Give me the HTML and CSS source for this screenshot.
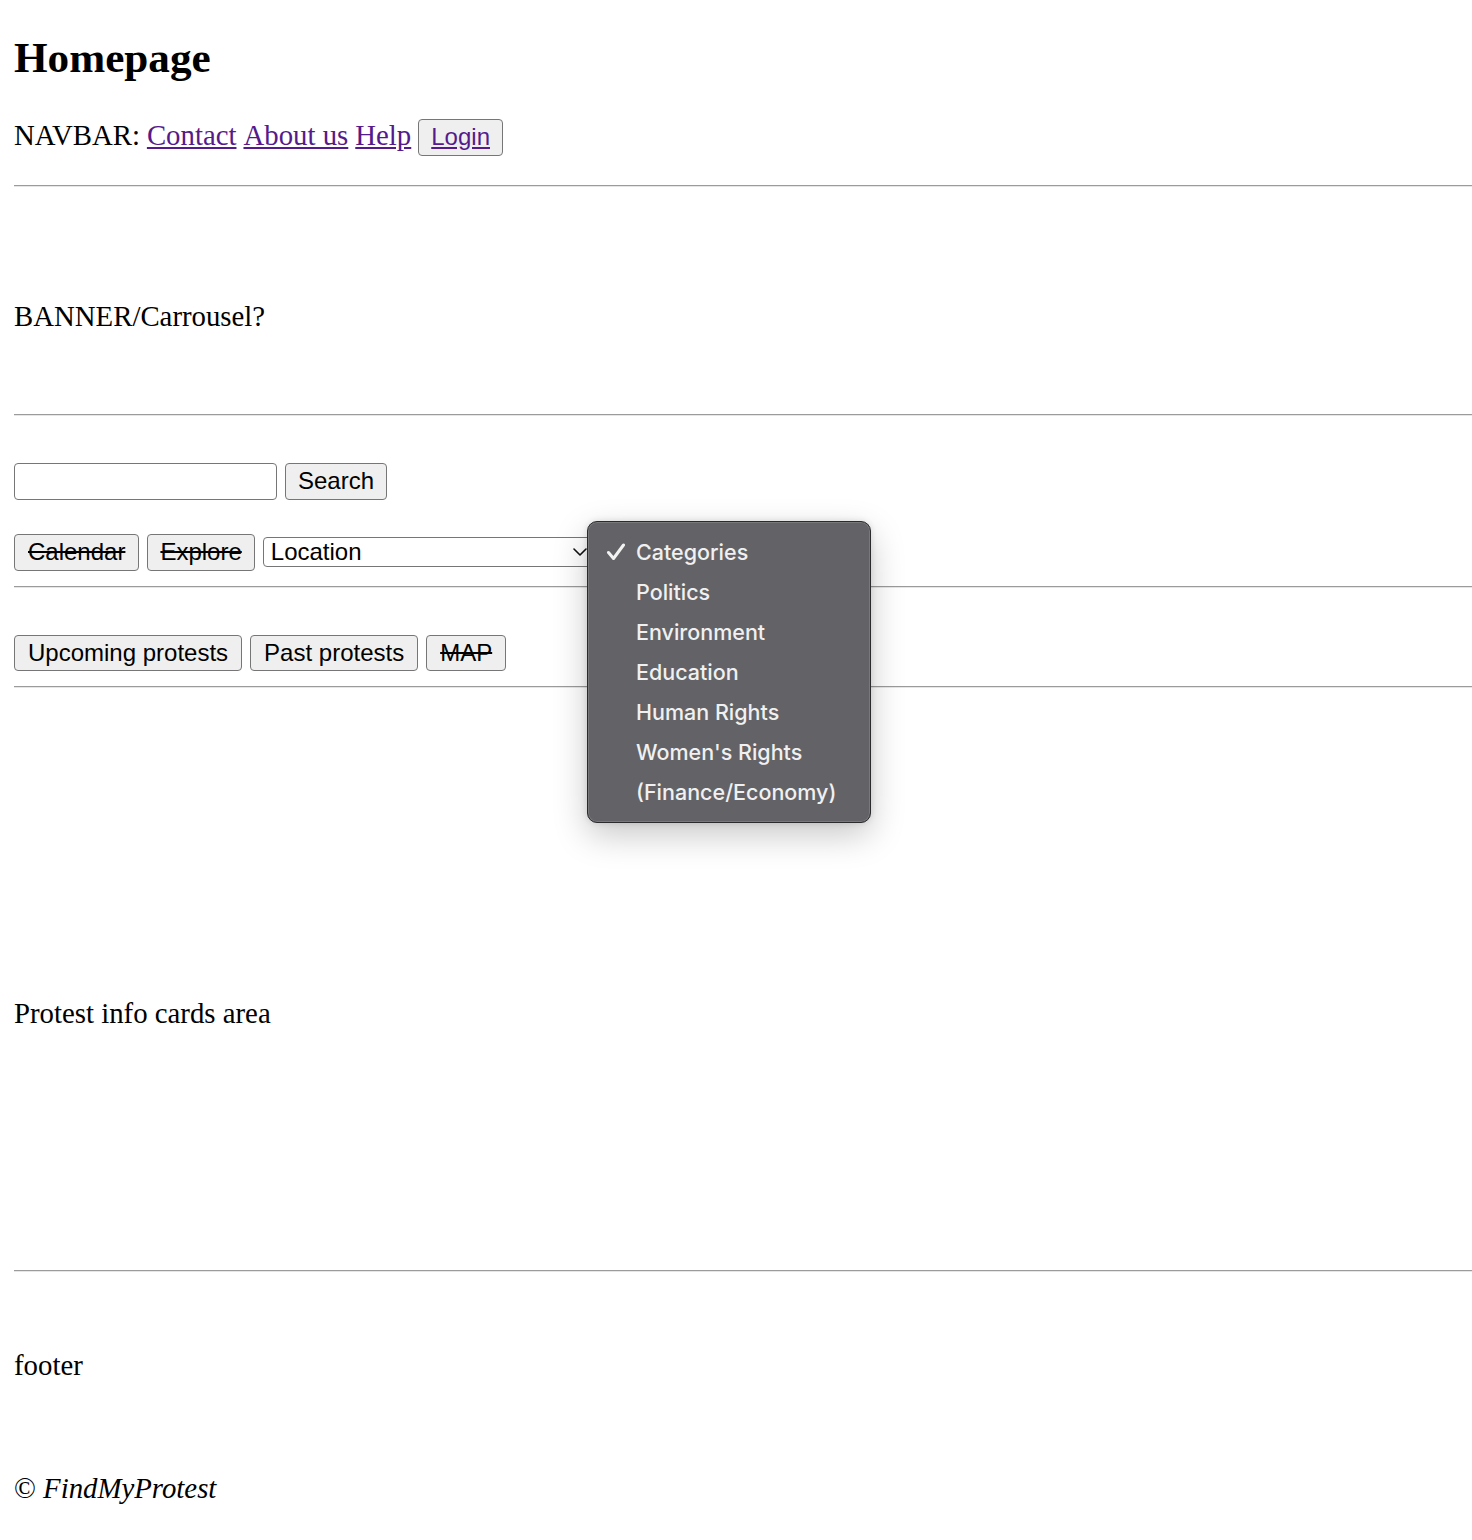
FILE: index.html
```html
<!DOCTYPE html>
<html lang="en">
<head>
<meta charset="utf-8">
<title>Homepage</title>
<link rel="stylesheet" href="styles.css">
</head>
<body>
<div class="page">
  <header class="top">
    <h1 class="title">Homepage</h1>
    <nav class="navbar">NAVBAR: <a class="link" href="#">Contact</a> <a class="link" href="#">About us</a> <a class="link" href="#">Help</a> <button class="btn btn-login" type="button"><a class="link btn-link" href="#">Login</a></button></nav>
  </header>
  <hr class="rule">
  <section class="banner"><p class="text">BANNER/Carrousel?</p></section>
  <hr class="rule">
  <section class="filters">
    <form class="search-row">
      <input class="search-input" type="text">
      <button class="btn btn-search" type="button">Search</button>
    </form>
    <div class="filter-row">
      <button class="btn strike" type="button">Calendar</button>
      <button class="btn btn-explore strike" type="button">Explore</button>
      <span class="select-wrap">
        <select class="select location"><option>Location</option></select>
        <svg class="chevron" width="14" height="8" viewBox="0 0 14 8"><path d="M1 1 L7 7 L13 1" fill="none" stroke="#111" stroke-width="1.6" stroke-linecap="round" stroke-linejoin="round"/></svg>
      </span>
      <span class="select-wrap">
        <select class="select categories"><option>Categories</option></select>
      </span>
    </div>
  </section>
  <hr class="rule">
  <section class="tabs">
    <button class="btn" type="button">Upcoming protests</button>
    <button class="btn" type="button">Past protests</button>
    <button class="btn strike" type="button">MAP</button>
  </section>
  <hr class="rule">
  <section class="cards"><p class="text">Protest info cards area</p></section>
  <hr class="rule">
  <footer class="footer">
    <p class="text">footer</p>
    <p class="text copyright">&copy; <i>FindMyProtest</i></p>
  </footer>
</div>

<div class="popup">
  <div class="item selected">
    <svg class="check" width="20" height="18" viewBox="0 0 20 18"><path d="M2.5 9.5 L7.5 15.5 L17.5 2" fill="none" stroke="#f2f2f2" stroke-width="3" stroke-linecap="round" stroke-linejoin="round"/></svg>
    <span>Categories</span>
  </div>
  <div class="item"><span>Politics</span></div>
  <div class="item"><span>Environment</span></div>
  <div class="item"><span>Education</span></div>
  <div class="item"><span>Human Rights</span></div>
  <div class="item"><span>Women's Rights</span></div>
  <div class="item"><span>(Finance/Economy)</span></div>
</div>
</body>
</html>
```

FILE: styles.css
```css
html, body {
  margin: 0;
  padding: 0;
  background: #ffffff;
}

body {
  font-family: "Liberation Serif", "Times New Roman", serif;
  font-size: 28.8px;
  line-height: 32px;
  color: #000;
  position: relative;
  min-height: 1540px;
}

.page {
  padding: 0 0 0 14px;
}

.top {
  padding: 34px 0 29px;
}

.title {
  margin: 0;
  font-size: 43.2px;
  line-height: 48px;
  font-weight: bold;
}

.navbar {
  margin-top: 37px;
  display: flex;
  align-items: baseline;
  gap: 7px;
  line-height: 32px;
}

.link {
  color: #551a8b;
  text-decoration: underline;
}

.btn {
  font-family: "Liberation Sans", Arial, sans-serif;
  font-size: 24px;
  line-height: 26.8px;
  padding: 4px 13px;
  margin: 0;
  border: 1px solid #767676;
  border-radius: 4px;
  background: #efefef;
  color: #000;
}

.btn-search,
.btn-login {
  padding-left: 12px;
  padding-right: 12px;
}

.btn-explore {
  padding-left: 12px;
  padding-right: 12px;
}

.btn-link {
  color: #551a8b;
}

.strike {
  text-decoration: line-through;
}

.rule {
  margin: 0;
  height: 0;
  border: 0;
  border-top: 1px solid #9b9b9b;
  border-bottom: 1px solid #e6e6e6;
}

.text {
  margin: 0;
}

.banner {
  padding: 113px 0 82px;
}

.filters {
  padding: 47px 0 15px;
}

.search-row {
  display: flex;
  align-items: center;
  gap: 8px;
  margin: 0;
}

.search-input {
  box-sizing: border-box;
  width: 263px;
  height: 37px;
  margin: 0;
  border: 1px solid #767676;
  border-radius: 4px;
  background: #fff;
  font-family: "Liberation Sans", Arial, sans-serif;
  font-size: 24px;
}

.filter-row {
  margin-top: 34px;
  display: flex;
  align-items: center;
  gap: 8px;
}

.select-wrap {
  position: relative;
  display: inline-flex;
}

.select {
  -webkit-appearance: none;
  appearance: none;
  box-sizing: border-box;
  height: 30px;
  margin: 0;
  padding: 0 0 0 7px;
  border: 1px solid #767676;
  border-radius: 4px;
  background: #fff;
  color: #000;
  font-family: "Liberation Sans", Arial, sans-serif;
  font-size: 24px;
  line-height: 28px;
}

.location {
  width: 331px;
}

.categories {
  width: 230px;
}

.chevron {
  position: absolute;
  left: 310px;
  top: 11px;
}

.tabs {
  padding: 47px 0 15px;
  display: flex;
  gap: 8px;
}

.cards {
  padding: 309px 0 241px;
}

.footer {
  padding: 77px 0 0;
}

.copyright {
  margin-top: 91px;
}

/* Native select menu (open) */
.popup {
  position: absolute;
  left: 587px;
  top: 521px;
  box-sizing: border-box;
  width: 284px;
  height: 302px;
  padding: 10px 0 11px;
  background: #636266;
  border: 1px solid #2b2b2d;
  border-radius: 10px;
  box-shadow: inset 0 0 0 1px rgba(255, 255, 255, 0.14), 0 12px 34px rgba(0, 0, 0, 0.22), 0 0 6px rgba(0, 0, 0, 0.12);
  font-family: Inter, "Noto Sans", sans-serif;
  font-size: 21.5px;
  font-weight: 500;
  color: #f0f0f0;
}

.item {
  position: relative;
  height: 40px;
  display: flex;
  align-items: center;
  padding-left: 48px;
}

.check {
  position: absolute;
  left: 18px;
  top: 11px;
}
```
